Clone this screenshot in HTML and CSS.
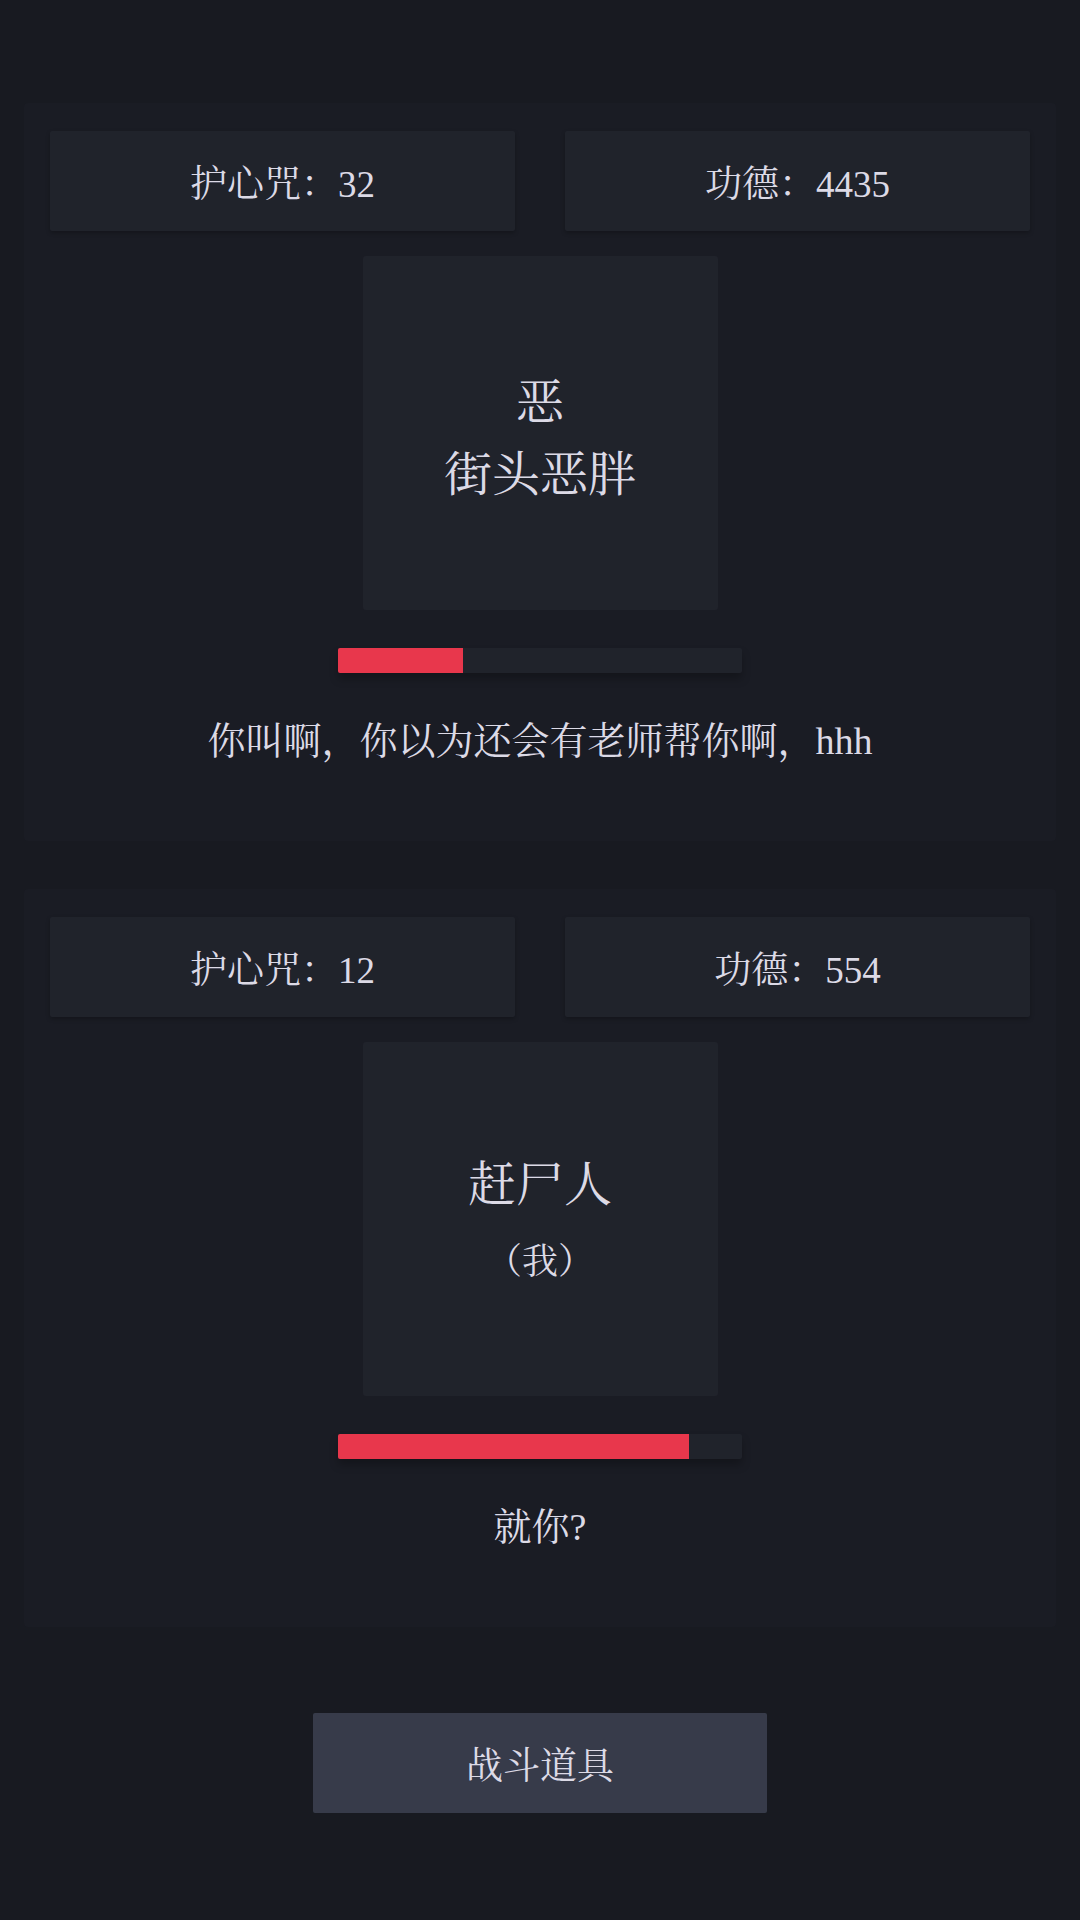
FILE: index.html
```html
<!DOCTYPE html>
<html lang="zh-CN">
<head>
<meta charset="utf-8">
<title>战斗</title>
<link rel="stylesheet" href="styles.css">
</head>
<body>
<div class="page">
  <section class="card">
    <div class="stats">
      <div class="stat">护心咒：32</div>
      <div class="stat">功德：4435</div>
    </div>
    <div class="avatar">
      <div class="tag">恶</div>
      <div class="name">街头恶胖</div>
    </div>
    <div class="bar"><div class="fill" style="width:31%"></div></div>
    <div class="line">你叫啊，你以为还会有老师帮你啊，hhh</div>
  </section>
  <section class="card">
    <div class="stats">
      <div class="stat">护心咒：12</div>
      <div class="stat">功德：554</div>
    </div>
    <div class="avatar">
      <div class="name">赶尸人</div>
      <div class="sub">（我）</div>
    </div>
    <div class="bar"><div class="fill" style="width:87%"></div></div>
    <div class="line">就你?</div>
  </section>
  <button class="action">战斗道具</button>
</div>
</body>
</html>
```

FILE: styles.css
```css
html, body {
  margin: 0;
  padding: 0;
  background: #181a21;
}
body {
  font-family: "Liberation Serif", "Noto Serif CJK SC", "Noto Serif SC", "Source Han Serif SC", "AR PL UMing CN", serif;
  color: #dcdae6;
}
.page {
  display: flex;
  flex-direction: column;
  align-items: center;
  padding: 103px 24px 0;
  gap: 48px;
}
.card {
  align-self: stretch;
  background: #1a1c24;
  border-radius: 4px;
  padding: 28px 26px 70px;
  display: flex;
  flex-direction: column;
  align-items: center;
}
.stats {
  align-self: stretch;
  display: grid;
  grid-template-columns: 1fr 1fr;
  gap: 50px;
}
.stat {
  height: 100px;
  background: #20232b;
  border-radius: 2px;
  box-shadow: 0 2px 4px rgba(0,0,0,0.25);
  display: flex;
  align-items: center;
  justify-content: center;
  font-size: 37px;
}
.avatar {
  margin-top: 25px;
  width: 355px;
  height: 354px;
  background: #20232b;
  border-radius: 3px;
  display: flex;
  flex-direction: column;
  align-items: center;
  justify-content: center;
}
.tag, .name {
  font-size: 48px;
  line-height: 72px;
}
.tag {
  margin-top: 12px;
}
.sub {
  font-size: 36px;
  line-height: 54px;
  margin-top: 14px;
}
.bar {
  margin-top: 38px;
  width: 404px;
  height: 25px;
  background: #20232b;
  border-radius: 2px;
  overflow: hidden;
  box-shadow: 0 6px 8px rgba(0,0,0,0.25);
}
.fill {
  height: 100%;
  background: #e8374c;
}
.line {
  margin-top: 38px;
  font-size: 38px;
  line-height: 60px;
  text-align: center;
}
.action {
  margin-top: 38px;
  width: 454px;
  height: 100px;
  border: none;
  border-radius: 2px;
  background: #373b4a;
  color: #dcdae6;
  font-family: inherit;
  font-size: 37px;
}
```
